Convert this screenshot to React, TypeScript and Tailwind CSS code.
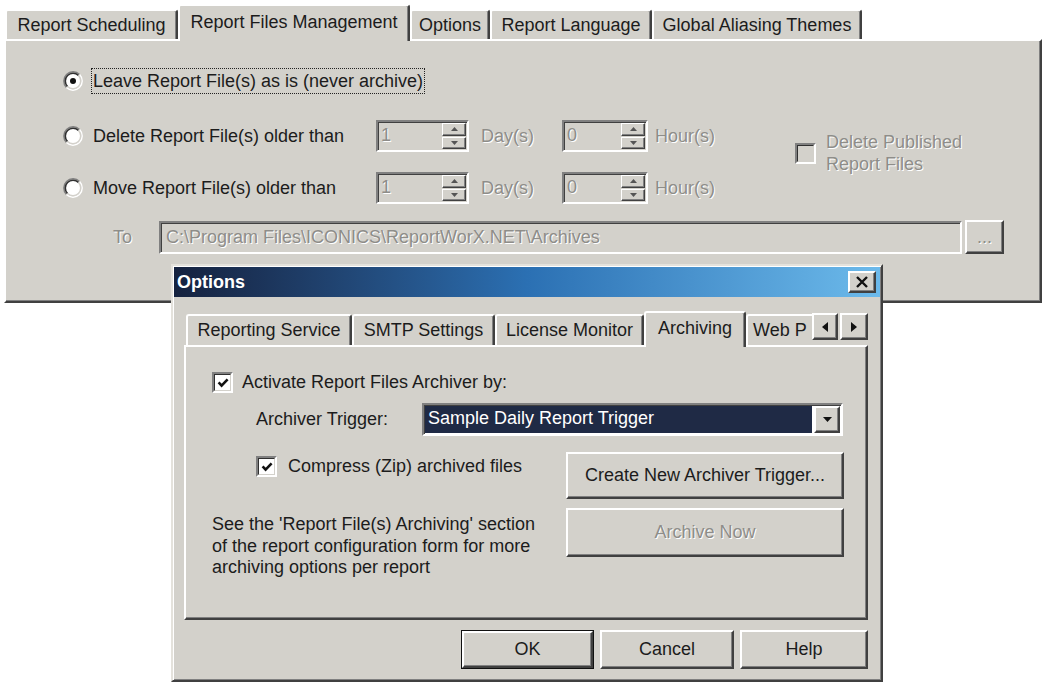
import React from "react";

const BG = "bg-[#d3d1cb]";
const DIS = "text-[#8e8d89] [text-shadow:1px_1px_0_#ffffff]";
const RAISED =
  "border-2 border-t-white border-l-white border-r-[#404040] border-b-[#404040] shadow-[inset_-1px_-1px_0_#808080]";
const SUNKEN =
  "border-2 border-t-[#808080] border-l-[#808080] border-r-white border-b-white shadow-[inset_1px_1px_0_#404040]";

function Radio({ checked }: { checked?: boolean }) {
  return (
    <svg width="20" height="20" viewBox="0 0 20 20" className="shrink-0">
      <circle cx="10" cy="10" r="8.5" fill="#ffffff" />
      <path d="M3.46 16.54 A9.25 9.25 0 0 1 16.54 3.46" fill="none" stroke="#808080" strokeWidth="1.5" />
      <path d="M4.52 15.48 A7.75 7.75 0 0 1 15.48 4.52" fill="none" stroke="#303030" strokeWidth="1.6" />
      <path d="M16.54 3.46 A9.25 9.25 0 0 1 3.46 16.54" fill="none" stroke="#ffffff" strokeWidth="1.5" />
      <path d="M15.48 4.52 A7.75 7.75 0 0 1 4.52 15.48" fill="none" stroke="#d3d1cb" strokeWidth="1.5" />
      {checked && <circle cx="10" cy="10" r="3" fill="#111111" />}
    </svg>
  );
}

function Check({ checked, disabled }: { checked?: boolean; disabled?: boolean }) {
  return (
    <div className="w-[21px] h-[21px] shrink-0 border-2 border-t-[#808080] border-l-[#808080] border-r-white border-b-white">
      <div
        className={`w-full h-full border border-t-[#303030] border-l-[#303030] border-r-[#d3d1cb] border-b-[#d3d1cb] flex items-center justify-center ${
          disabled ? "bg-[#d3d1cb]" : "bg-white"
        }`}
      >
        {checked && (
          <svg width="12" height="12" viewBox="0 0 12 12">
            <path d="M1.6 5.4 L4.6 8.6 L10.6 2.4" stroke="#111" strokeWidth="2.6" fill="none" />
          </svg>
        )}
      </div>
    </div>
  );
}

function SpinBtn({ up }: { up?: boolean }) {
  return (
    <div className={`flex-1 ${BG} border border-t-white border-l-white border-r-[#404040] border-b-[#404040] shadow-[inset_-1px_-1px_0_#808080] flex items-center justify-center`}>
      <svg width="7" height="4" viewBox="0 0 7 4">
        {up ? <path d="M0 4 L3.5 0 L7 4 Z" fill="#555" /> : <path d="M0 0 L3.5 4 L7 0 Z" fill="#555" />}
      </svg>
    </div>
  );
}

function Spin({ value, w }: { value: string; w: string }) {
  return (
    <div className={`${w} h-[32px] flex ${SUNKEN} ${BG}`}>
      <div className={`flex-1 pl-[3px] leading-[27px] ${DIS}`}>{value}</div>
      <div className="w-[25px] flex flex-col py-[1px] pr-[1px] gap-[1px]">
        <SpinBtn up />
        <SpinBtn />
      </div>
    </div>
  );
}

function MainTab({ label, w, selected }: { label: string; w: string; selected?: boolean }) {
  return (
    <div
      className={`${w} ${
        selected ? "h-[37px] -mb-[2px] relative z-10 pb-[3px]" : "h-[30px]"
      } ${BG} border-t-2 border-l-2 border-r-2 border-t-white border-l-white border-r-[#404040] rounded-t-[3px] shadow-[inset_-1px_0_0_#808080] flex items-center justify-center whitespace-nowrap`}
    >
      {label}
    </div>
  );
}

function DlgTab({ label, w, selected }: { label: string; w: string; selected?: boolean }) {
  return (
    <div
      className={`${w} ${
        selected ? "h-[36px] -mb-[2px] relative z-10 pb-[4px]" : "h-[31px]"
      } ${BG} border-t-2 border-l-2 border-r-2 border-t-white border-l-white border-r-[#404040] rounded-t-[3px] shadow-[inset_-1px_0_0_#808080] flex items-center justify-center whitespace-nowrap`}
    >
      {label}
    </div>
  );
}

function MainWindow() {
  return (
    <div className="ml-[4px] pt-[4px] w-[1038px]">
      <div className="flex items-end h-[35px] pl-[1px]">
        <MainTab label="Report Scheduling" w="w-[173px]" />
        <MainTab label="Report Files Management" w="w-[232px]" selected />
        <MainTab label="Options" w="w-[80px]" />
        <MainTab label="Report Language" w="w-[162px]" />
        <MainTab label="Global Aliasing Themes" w="w-[210px]" />
      </div>
      <div className={`h-[264px] ${RAISED} ${BG} pt-[24px] pl-[57px]`}>
        <div className="h-[32px] flex items-center">
          <Radio checked />
          <span className="ml-[8px] border border-dotted border-[#222] px-[1px] h-[26px] leading-[24px] whitespace-nowrap">
            Leave Report File(s) as is (never archive)
          </span>
        </div>
        <div className="flex mt-[23px]">
          <div className="w-[732px]">
            <div className="h-[32px] flex items-center">
              <div className="w-[313px] flex items-center">
                <Radio />
                <span className="ml-[10px] whitespace-nowrap">Delete Report File(s) older than</span>
              </div>
              <Spin value="1" w="w-[93px]" />
              <span className={`ml-[12px] w-[81px] ${DIS}`}>Day(s)</span>
              <Spin value="0" w="w-[86px]" />
              <span className={`ml-[7px] ${DIS}`}>Hour(s)</span>
            </div>
            <div className="h-[32px] flex items-center mt-[20px]">
              <div className="w-[313px] flex items-center">
                <Radio />
                <span className="ml-[10px] whitespace-nowrap">Move Report File(s) older than</span>
              </div>
              <Spin value="1" w="w-[93px]" />
              <span className={`ml-[12px] w-[81px] ${DIS}`}>Day(s)</span>
              <Spin value="0" w="w-[86px]" />
              <span className={`ml-[7px] ${DIS}`}>Hour(s)</span>
            </div>
          </div>
          <div className="mt-[11px] h-[44px] flex items-center">
            <Check disabled />
            <div className={`ml-[10px] leading-[22px] ${DIS}`}>
              <div>Delete Published</div>
              <div>Report Files</div>
            </div>
          </div>
        </div>
        <div className="mt-[16px] h-[34px] flex items-center">
          <span className={`ml-[50px] w-[46px] ${DIS}`}>To</span>
          <div className={`w-[803px] h-[33px] ${SUNKEN} ${BG} pl-[5px] leading-[28px] whitespace-nowrap ${DIS}`}>
            C:\Program Files\ICONICS\ReportWorX.NET\Archives
          </div>
          <div className={`ml-[3px] w-[39px] h-[34px] ${RAISED} ${BG} flex items-center justify-center ${DIS}`}>
            ...
          </div>
        </div>
      </div>
    </div>
  );
}

function Btn({ children, w, h, disabled, def }: { children: React.ReactNode; w: string; h: string; disabled?: boolean; def?: boolean }) {
  const inner = (
    <div className={`w-full h-full ${RAISED} ${BG} flex items-center justify-center whitespace-nowrap ${disabled ? DIS : ""}`}>
      {children}
    </div>
  );
  if (def) {
    return <div className={`${w} ${h} border border-[#111]`}>{inner}</div>;
  }
  return <div className={`${w} ${h}`}>{inner}</div>;
}

function OptionsDialog() {
  return (
    <div className={`absolute left-[171px] top-[264px] w-[712px] h-[418px] ${BG} border-2 border-t-[#e4e2dc] border-l-[#e4e2dc] border-r-[#404040] border-b-[#404040] shadow-[inset_1px_1px_0_#ffffff,inset_-1px_-1px_0_#808080] p-[1px]`}>
      <div className="h-[30px] bg-linear-to-r from-[#15223f] via-[#2b70b3] to-[#6cbaeb] flex items-center justify-between pl-[3px] pr-[4px]">
        <span className="text-white font-bold text-[18px]">Options</span>
        <div className={`w-[28px] h-[22px] ${RAISED} ${BG} flex items-center justify-center`}>
          <svg width="14" height="12" viewBox="0 0 14 12">
            <path d="M2 1 L12 11 M12 1 L2 11" stroke="#111" strokeWidth="2.4" />
          </svg>
        </div>
      </div>
      <div className="pl-[10px] pr-[12px]">
        <div className="mt-[14px] flex items-end h-[34px] pl-[2px]">
          <DlgTab label="Reporting Service" w="w-[166px]" />
          <DlgTab label="SMTP Settings" w="w-[143px]" />
          <DlgTab label="License Monitor" w="w-[149px]" />
          <DlgTab label="Archiving" w="w-[102px]" selected />
          <div className={`w-[66px] h-[31px] ${BG} border-t-2 border-l-2 border-t-white border-l-white rounded-tl-[3px] whitespace-nowrap pl-[5px] leading-[28px]`}>
            Web P
          </div>
          <div className="self-start mt-[2px] flex gap-[2px]">
            <div className={`w-[26px] h-[27px] ${RAISED} ${BG} flex items-center justify-center`}>
              <svg width="6" height="10" viewBox="0 0 6 10">
                <path d="M6 0 L0 5 L6 10 Z" fill="#111" />
              </svg>
            </div>
            <div className={`w-[28px] h-[27px] ${RAISED} ${BG} flex items-center justify-center`}>
              <svg width="6" height="10" viewBox="0 0 6 10">
                <path d="M0 0 L6 5 L0 10 Z" fill="#111" />
              </svg>
            </div>
          </div>
        </div>
        <div className={`h-[275px] ${RAISED} ${BG} pt-[25px] pl-[26px]`}>
          <div className="h-[21px] flex items-center">
            <Check checked />
            <span className="ml-[9px] whitespace-nowrap">Activate Report Files Archiver by:</span>
          </div>
          <div className="mt-[10px] h-[33px] flex items-center">
            <span className="ml-[44px] w-[166px] whitespace-nowrap">Archiver Trigger:</span>
            <div className={`w-[421px] h-[33px] ${SUNKEN} bg-white flex items-stretch p-[1px]`}>
              <div className="flex-1 bg-[#1f2a45] text-white pl-[3px] leading-[25px] whitespace-nowrap">
                Sample Daily Report Trigger
              </div>
              <div className={`w-[26px] ml-[2px] ${RAISED} ${BG} flex items-center justify-center`}>
                <svg width="9" height="5" viewBox="0 0 9 5">
                  <path d="M0 0 L4.5 5 L9 0 Z" fill="#111" />
                </svg>
              </div>
            </div>
          </div>
          <div className="mt-[16px] flex">
            <div className="w-[354px]">
              <div className="mt-[4px] ml-[44px] h-[21px] flex items-center">
                <Check checked />
                <span className="ml-[11px] whitespace-nowrap">Compress (Zip) archived files</span>
              </div>
              <div className="mt-[37px] leading-[21.5px]">
                <div>See the 'Report File(s) Archiving' section</div>
                <div>of the report configuration form for more</div>
                <div>archiving options per report</div>
              </div>
            </div>
            <div className="w-[278px]">
              <Btn w="w-[278px]" h="h-[47px]">Create New Archiver Trigger...</Btn>
              <div className="mt-[9px]">
                <Btn w="w-[278px]" h="h-[49px]" disabled>
                  Archive Now
                </Btn>
              </div>
            </div>
          </div>
        </div>
        <div className="mt-[10px] flex justify-end gap-[6px]">
          <Btn w="w-[133px]" h="h-[39px]" def>
            OK
          </Btn>
          <Btn w="w-[134px]" h="h-[39px]">Cancel</Btn>
          <Btn w="w-[128px]" h="h-[39px]">Help</Btn>
        </div>
      </div>
    </div>
  );
}

export default function App() {
  return (
    <div className="relative w-[1047px] h-[687px] bg-white overflow-hidden text-[18px] text-[#1c1c1c] font-['Liberation_Sans',Arial,sans-serif]">
      <MainWindow />
      <OptionsDialog />
    </div>
  );
}
